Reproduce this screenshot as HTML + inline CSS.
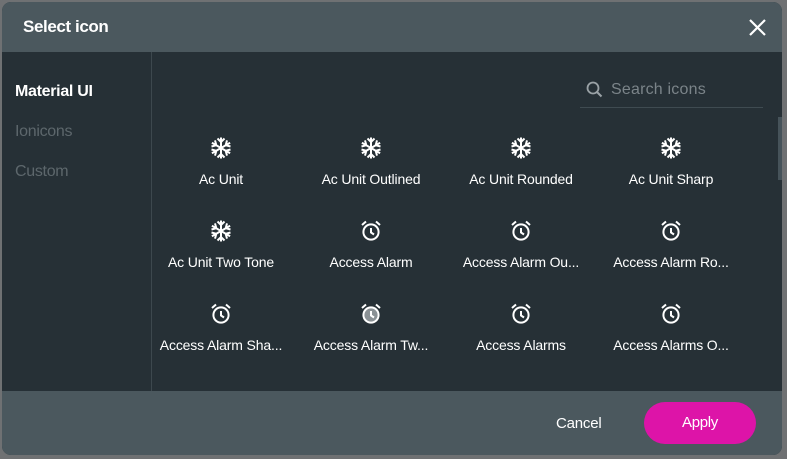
<!DOCTYPE html>
<html><head><style>
body{margin:0;width:787px;height:459px;background:#6f7173;position:relative;overflow:hidden;font-family:"Liberation Sans",sans-serif;}
.dlg{position:absolute;left:2px;top:2px;width:780px;height:453px;border-radius:9px;overflow:hidden;background:#263036;}
.hdr{position:absolute;left:0;top:0;width:100%;height:50px;background:#4b585e;}
.hdr .t{position:absolute;left:21px;top:15px;color:#fff;font-weight:bold;font-size:17px;letter-spacing:-0.4px;}
.side{position:absolute;left:0;top:50px;width:149px;height:339px;border-right:1px solid #3d484e;}
.side div{position:absolute;left:13px;font-size:16px;letter-spacing:-0.3px;color:#5d676c;}
.ftr{position:absolute;left:0;top:389px;width:100%;height:64px;background:#4b585e;}
.cancel{position:absolute;left:554px;top:24px;color:#fff;font-size:15px;letter-spacing:-0.2px;}
.apply{position:absolute;left:642px;top:11px;width:112px;height:42px;border-radius:21px;background:#dd14a8;color:#fff;font-size:15px;text-align:center;line-height:42px;letter-spacing:-0.3px;}
.search{position:absolute;left:578px;top:73px;width:183px;height:32px;border-bottom:1px solid #3f4b51;}
.search span{position:absolute;left:31px;top:6px;color:#7b8489;font-size:16px;letter-spacing:0.2px;}
.cell{position:absolute;width:150px;text-align:center;color:#fff;font-size:14px;letter-spacing:-0.15px;line-height:16px;}
.cell svg{display:block;margin:0 auto 11px;}
.sb{position:absolute;left:776px;top:115px;width:4px;height:63px;background:#46535a;}
</style></head><body>
<div class="dlg">
<div class="hdr"><div class="t">Select icon</div>
<svg style="position:absolute;left:747px;top:17px" width="17" height="17" viewBox="0 0 17 17"><path d="M1 1L16 16M16 1L1 16" stroke="#fff" stroke-width="2.2"/></svg></div>
<div class="side"><div style="top:31px;color:#fff;font-weight:bold;">Material UI</div><div style="top:71px">Ionicons</div><div style="top:111px">Custom</div></div>
<div class="search"><svg style="position:absolute;left:6px;top:6px" width="17" height="17" viewBox="0 0 17 17"><circle cx="7" cy="7" r="5.5" stroke="#9aa2a6" stroke-width="1.8" fill="none"/><path d="M11 11L15.5 15.5" stroke="#9aa2a6" stroke-width="2"/></svg><span>Search icons</span></div>
<div class="sb"></div>
<div class="ftr"><div class="cancel">Cancel</div><div class="apply">Apply</div></div>
</div>
<svg width="0" height="0" style="position:absolute"><defs>
<g id="sn"><path d="M12 1.5v21M2.9 6.75l18.2 10.5M2.9 17.25l18.2-10.5M8.5 2.5l3.5 3.5 3.5-3.5M8.5 21.5l3.5-3.5 3.5 3.5M2.5 10.5l4.8-1.3-1.3-4.8M21.5 10.5l-4.8-1.3 1.3-4.8M2.5 13.5l4.8 1.3-1.3 4.8M21.5 13.5l-4.8 1.3 1.3 4.8" stroke="#fff" stroke-width="2" fill="none"/></g>
<g id="al"><circle cx="12" cy="13" r="7.6" stroke="#fff" stroke-width="2" fill="none"/><path d="M12 9v4.5l3 2M3 6l4-3.5M21 6l-4-3.5" stroke="#fff" stroke-width="2" fill="none"/></g>
<g id="al2"><circle cx="12" cy="13" r="7.6" stroke="#fff" stroke-width="2" fill="#8a9195"/><path d="M12 9v4.5l3 2M3 6l4-3.5M21 6l-4-3.5" stroke="#fff" stroke-width="2" fill="none"/></g>
</defs></svg>
<div class="cell" style="left:146px;top:136px"><svg width="24" height="24"><use href="#sn"/></svg>Ac Unit</div>
<div class="cell" style="left:296px;top:136px"><svg width="24" height="24"><use href="#sn"/></svg>Ac Unit Outlined</div>
<div class="cell" style="left:446px;top:136px"><svg width="24" height="24"><use href="#sn"/></svg>Ac Unit Rounded</div>
<div class="cell" style="left:596px;top:136px"><svg width="24" height="24"><use href="#sn"/></svg>Ac Unit Sharp</div>
<div class="cell" style="left:146px;top:219px"><svg width="24" height="24"><use href="#sn"/></svg>Ac Unit Two Tone</div>
<div class="cell" style="left:296px;top:219px"><svg width="24" height="24"><use href="#al"/></svg>Access Alarm</div>
<div class="cell" style="left:446px;top:219px"><svg width="24" height="24"><use href="#al"/></svg>Access Alarm Ou...</div>
<div class="cell" style="left:596px;top:219px"><svg width="24" height="24"><use href="#al"/></svg>Access Alarm Ro...</div>
<div class="cell" style="left:146px;top:302px"><svg width="24" height="24"><use href="#al"/></svg>Access Alarm Sha...</div>
<div class="cell" style="left:296px;top:302px"><svg width="24" height="24"><use href="#al2"/></svg>Access Alarm Tw...</div>
<div class="cell" style="left:446px;top:302px"><svg width="24" height="24"><use href="#al"/></svg>Access Alarms</div>
<div class="cell" style="left:596px;top:302px"><svg width="24" height="24"><use href="#al"/></svg>Access Alarms O...</div>
</body></html>
